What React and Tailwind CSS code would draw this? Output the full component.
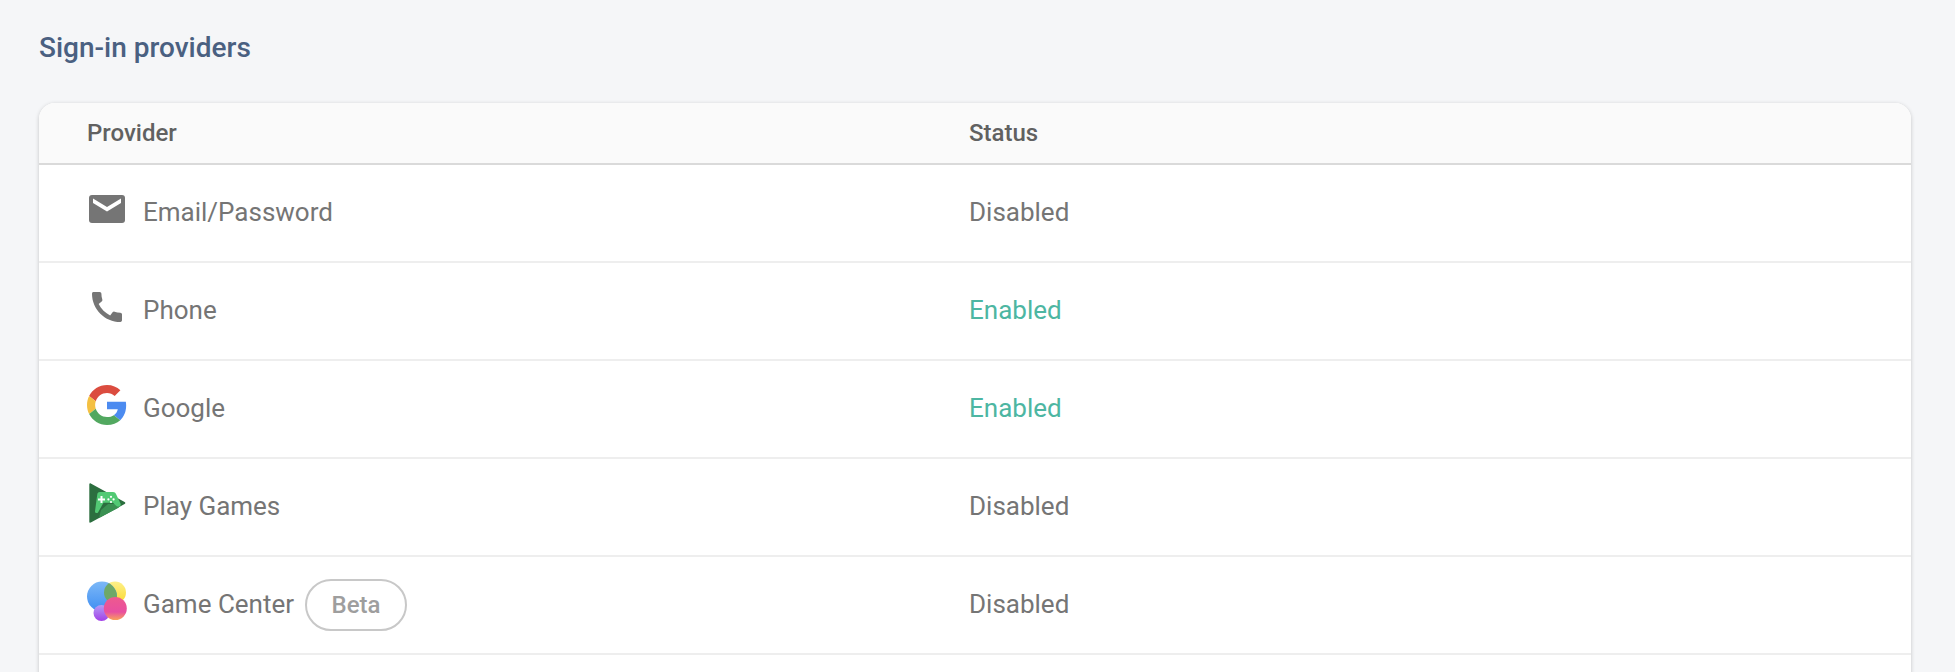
const MailIcon = () => (
  <svg viewBox="0 0 40 40" className="h-10 w-10 shrink-0">
    <rect x="2" y="6" width="36" height="28" rx="3" fill="#757575" />
    <path d="M6 9.500 20 18l14-8.500V14l-14 8.500L6 14z" fill="#fff" />
  </svg>
);

const PhoneIcon = () => (
  <svg viewBox="0 0 24 24" className="h-10 w-10 shrink-0">
    <path
      fill="#757575"
      d="M20.010 15.380c-1.230 0-2.420-.2-3.530-.56-.35-.12-.74-.03-1.010.24l-1.570 1.970c-2.830-1.350-5.480-3.900-6.890-6.830l1.950-1.660c.27-.28.35-.67.24-1.020-.37-1.110-.56-2.300-.56-3.530 0-.54-.45-.99-.99-.99H4.190C3.650 3 3 3.240 3 3.990 3 13.280 10.730 21 20.010 21c.71 0 .99-.63.99-1.180v-3.450c0-.54-.45-.99-.99-.99z"
    />
  </svg>
);

const GoogleIcon = () => (
  <svg viewBox="0 0 48 48" className="h-10 w-10 shrink-0">
    <path fill="#DB4C3F" d="M24 9.500c3.540 0 6.710 1.220 9.210 3.600l6.850-6.850C35.900 2.380 30.470 0 24 0 14.620 0 6.510 5.380 2.560 13.220l7.980 6.190C12.430 13.720 17.740 9.500 24 9.500z" />
    <path fill="#4C8BF0" d="M46.980 24.550c0-1.570-.15-3.090-.38-4.550H24v9.020h12.940c-.58 2.960-2.260 5.480-4.780 7.180l7.730 6c4.510-4.180 7.090-10.360 7.090-17.650z" />
    <path fill="#F4C042" d="M10.530 28.590c-.48-1.450-.76-2.990-.76-4.590s.27-3.140.76-4.590l-7.980-6.190C.92 16.460 0 20.120 0 24c0 3.880.92 7.540 2.560 10.780l7.970-6.190z" />
    <path fill="#52A860" d="M24 48c6.480 0 11.930-2.130 15.890-5.810l-7.730-6c-2.150 1.450-4.920 2.300-8.160 2.300-6.260 0-11.570-4.220-13.470-9.910l-7.980 6.190C6.510 42.620 14.620 48 24 48z" />
  </svg>
);

const PlayGamesIcon = () => (
  <svg viewBox="0 0 40 40" className="h-10 w-10 shrink-0">
    <path d="M3.800.400 37.600 18.900c1 .6 1 1.600 0 2.200L3.800 39.600c-.8.400-1.500 0-1.500-.9V1.300c0-.9.700-1.300 1.500-.9z" fill="#2c6e3f" />
    <path d="M14 27 21 21h7l4 3.500L12 35z" fill="#3a9152" />
    <path
      d="M13 9h13c1.500 0 2.500.7 3 2l4.500 9.500c.7 1.800-.4 3.300-2 3.300-1 0-1.700-.4-2.400-1.100l-3.100-3H16.500L11 29.500c-1 1.200-3.200.4-3-1.300l2.300-17c.2-1.400 1.200-2.200 2.700-2.200z"
      fill="#52c974"
    />
    <path d="M13.500 13h2v2.500H18v2h-2.500V20h-2v-2.500H11v-2h2.500z" fill="#fff" />
    <g fill="#fff">
      <circle cx="24" cy="13.800" r="1.100" />
      <circle cx="24" cy="19" r="1.100" />
      <circle cx="21.400" cy="16.400" r="1.100" />
      <circle cx="26.600" cy="16.400" r="1.100" />
    </g>
  </svg>
);

const GameCenterIcon = () => (
  <svg viewBox="0 0 40 40" className="h-10 w-10 shrink-0">
    <defs>
      <linearGradient id="gc-blue" x1="0" y1="0" x2="0" y2="1">
        <stop offset="0" stopColor="#7cb8f7" />
        <stop offset="1" stopColor="#3f8ef2" />
      </linearGradient>
      <linearGradient id="gc-yellow" x1="0" y1="0" x2="0" y2="1">
        <stop offset="0" stopColor="#fdf08a" />
        <stop offset="1" stopColor="#fbd92f" />
      </linearGradient>
      <linearGradient id="gc-purple" x1="0" y1="0" x2="0" y2="1">
        <stop offset="0" stopColor="#b49cf5" />
        <stop offset="1" stopColor="#a23fe8" />
      </linearGradient>
      <linearGradient id="gc-pink" x1="0" y1="0" x2="0" y2="1">
        <stop offset="0" stopColor="#ee5a8e" />
        <stop offset="0.65" stopColor="#e84fa0" />
        <stop offset="1" stopColor="#f9a25a" />
      </linearGradient>
      <clipPath id="gc-clip">
        <circle cx="15" cy="15.500" r="15" />
      </clipPath>
    </defs>
    <circle cx="28" cy="11.500" r="11" fill="url(#gc-yellow)" />
    <circle cx="15" cy="15.500" r="15" fill="url(#gc-blue)" />
    <circle cx="28" cy="11.500" r="11" fill="#6ea868" clipPath="url(#gc-clip)" />
    <circle cx="14.500" cy="32" r="8" fill="url(#gc-purple)" />
    <circle cx="28.300" cy="27.500" r="11.500" fill="url(#gc-pink)" />
  </svg>
);

const rows = [
  { icon: <MailIcon />, name: "Email/Password", status: "Disabled" },
  { icon: <PhoneIcon />, name: "Phone", status: "Enabled" },
  { icon: <GoogleIcon />, name: "Google", status: "Enabled" },
  { icon: <PlayGamesIcon />, name: "Play Games", status: "Disabled" },
  { icon: <GameCenterIcon />, name: "Game Center", status: "Disabled", beta: true },
];

export default function App() {
  return (
    <div className="h-[672px] overflow-hidden bg-[#f5f6f8] pl-[39px] pr-[44px] pt-[32px] font-['Roboto',sans-serif]">
      <h2 className="text-[28px] leading-[32px] font-medium text-[#4a6081]">Sign-in providers</h2>
      <div className="mt-[39px] rounded-t-[16px] bg-white shadow-[0_1px_4px_rgba(0,0,0,0.2)]">
        <div className="flex h-[62px] items-center rounded-t-[16px] border-b-2 border-[#dadada] bg-[#fafafa] pl-[48px] text-[24px] font-medium text-[#616161]">
          <div className="w-[882px]">Provider</div>
          <div>Status</div>
        </div>
        {rows.map((r) => (
          <div key={r.name} className="flex h-[98px] items-center border-b-2 border-[#eeeeee] pb-[2px] pl-[48px] text-[26px] text-[#757575]">
            <div className="flex w-[882px] items-center gap-[16px]">
              <div className="mb-[6px]">{r.icon}</div>
              <span>{r.name}</span>
              {r.beta && (
                <span className="mt-[2px] -ml-[5px] flex h-[52px] w-[102px] items-center justify-center rounded-full border-2 border-[#c8c8c8] text-[24px] font-medium text-[#9e9e9e]">
                  Beta
                </span>
              )}
            </div>
            <div className={r.status === "Enabled" ? "text-[#4db6a2]" : ""}>{r.status}</div>
          </div>
        ))}
        <div className="h-[98px]" />
      </div>
    </div>
  );
}
